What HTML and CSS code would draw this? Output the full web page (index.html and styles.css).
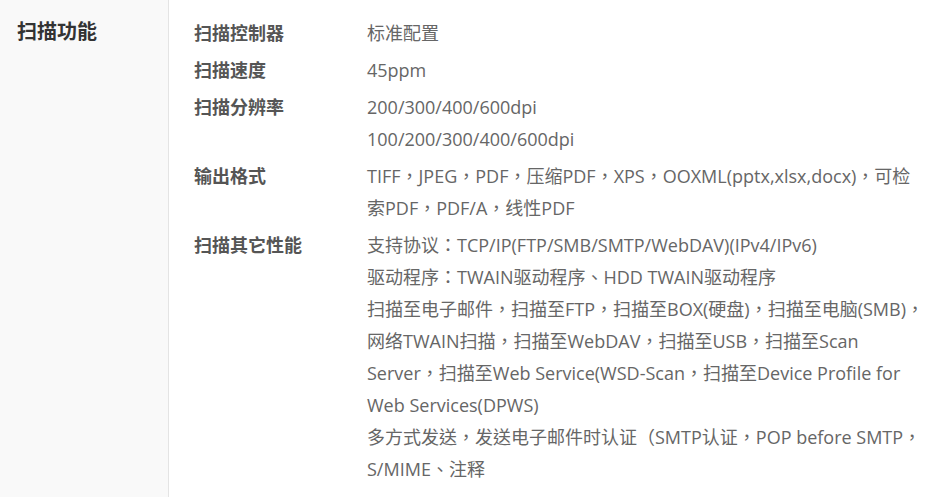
FILE: index.html
```html
<!DOCTYPE html>
<html lang="zh-CN">
<head>
<meta charset="utf-8">
<title>扫描功能</title>
<link rel="stylesheet" href="styles.css">
</head>
<body>
<div class="section">
  <div class="side">
    <h2 class="side-title">扫描功能</h2>
  </div>
  <div class="specs">
    <div class="row">
      <div class="label">扫描控制器</div>
      <div class="value" lang="zh-TW"><p>标准配置</p></div>
    </div>
    <div class="row">
      <div class="label">扫描速度</div>
      <div class="value" lang="zh-TW"><p>45ppm</p></div>
    </div>
    <div class="row">
      <div class="label">扫描分辨率</div>
      <div class="value" lang="zh-TW"><p>200/300/400/600dpi</p><p>100/200/300/400/600dpi</p></div>
    </div>
    <div class="row">
      <div class="label">输出格式</div>
      <div class="value" lang="zh-TW"><p>TIFF，JPEG，PDF，压缩PDF，XPS，OOXML(pptx,xlsx,docx)，可检<br>索PDF，PDF/A，线性PDF</p></div>
    </div>
    <div class="row">
      <div class="label">扫描其它性能</div>
      <div class="value" lang="zh-TW">
        <p>支持协议：TCP/IP(FTP/SMB/SMTP/WebDAV)(IPv4/IPv6)</p>
        <p>驱动程序：TWAIN驱动程序、HDD TWAIN驱动程序</p>
        <p>扫描至电子邮件，扫描至FTP，扫描至BOX(硬盘)，扫描至电脑(SMB)，<br>网络TWAIN扫描，扫描至WebDAV，扫描至USB，扫描至Scan<br>Server，扫描至Web Service(WSD-Scan，扫描至Device Profile for<br>Web Services(DPWS)</p>
        <p>多方式发送，发送电子邮件时认证（SMTP认证，POP before SMTP，<br>S/MIME、注释</p>
      </div>
    </div>
  </div>
</div>
</body>
</html>
```

FILE: styles.css
```css
html, body {
  margin: 0;
  padding: 0;
  background: #ffffff;
}
body {
  font-family: "Open Sans", "Noto Sans CJK SC", sans-serif;
  color: #666666;
}
.section {
  display: flex;
  min-height: 497px;
  width: 929px;
}
.side {
  flex: none;
  width: 169px;
  box-sizing: border-box;
  background: #f9f9f9;
  border-right: 1px solid #e4e4e4;
}
.side-title {
  margin: 0;
  padding: 17px 0 0 17px;
  font-size: 20px;
  line-height: 30px;
  font-weight: bold;
  color: #333333;
}
.specs {
  flex: 1;
  padding: 17px 0 0 25px;
}
.row {
  display: grid;
  grid-template-columns: 173px 1fr;
  margin-bottom: 5px;
}
.label {
  font-size: 18px;
  line-height: 32px;
  font-weight: bold;
  color: #555555;
}
.value p {
  margin: 0;
  font-family: "Open Sans", "Noto Sans CJK TC", sans-serif;
  font-size: 18px;
  line-height: 32px;
  white-space: nowrap;
  color: #666666;
}
```
